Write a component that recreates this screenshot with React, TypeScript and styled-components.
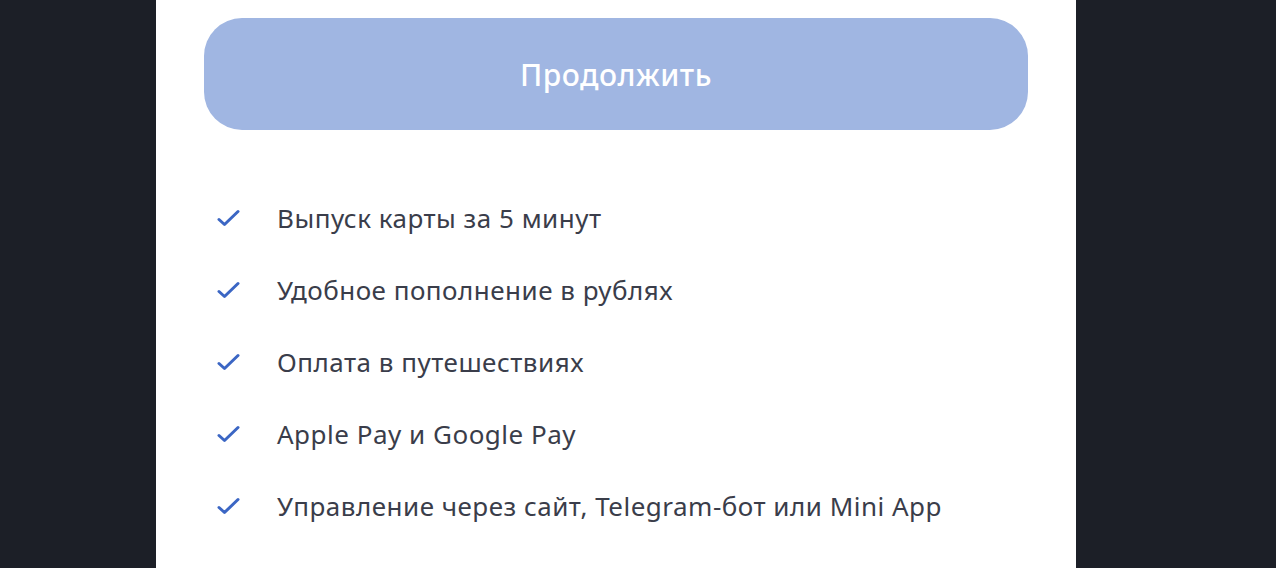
import styled, { createGlobalStyle } from "styled-components";

const GlobalStyle = createGlobalStyle`
  html, body {
    margin: 0;
    padding: 0;
    height: 100%;
    background: #1c1f27;
  }
  body {
    font-family: "Noto Sans", "Liberation Sans", sans-serif;
  }
`;

const FEATURES = [
  "Выпуск карты за 5 минут",
  "Удобное пополнение в рублях",
  "Оплата в путешествиях",
  "Apple Pay и Google Pay",
  "Управление через сайт, Telegram-бот или Mini App",
];

export default function App() {
  return (
    <Page>
      <GlobalStyle />
      <Panel>
        <ContinueButton type="button">Продолжить</ContinueButton>
        <FeatureList>
          {FEATURES.map((text) => (
            <FeatureItem key={text}>
              <CheckIcon />
              <FeatureText>{text}</FeatureText>
            </FeatureItem>
          ))}
        </FeatureList>
      </Panel>
    </Page>
  );
}

function CheckIcon() {
  return (
    <CheckBox>
      <svg width="24" height="18" viewBox="0 0 24 18" fill="none">
        <path
          d="M2 10.5 L7.5 15.5 L21 2.5"
          stroke="#3b66c4"
          strokeWidth="3"
          strokeLinecap="round"
          strokeLinejoin="round"
        />
      </svg>
    </CheckBox>
  );
}

const Page = styled.div`
  display: flex;
  justify-content: flex-start;
  height: 568px;
  padding-left: 156px;
  overflow: hidden;
  background: #1c1f27;
`;

const Panel = styled.main`
  display: flex;
  flex-direction: column;
  width: 920px;
  box-sizing: border-box;
  padding: 18px 48px 0;
  background: #ffffff;
`;

const ContinueButton = styled.button`
  height: 112px;
  width: 100%;
  border: none;
  border-radius: 38px;
  background: #a0b6e2;
  color: #ffffff;
  font-family: inherit;
  font-size: 30px;
  font-weight: 500;
  letter-spacing: 0.5px;
  cursor: pointer;
`;

const FeatureList = styled.ul`
  list-style: none;
  margin: 52px 0 0;
  padding: 0 0 0 13px;
`;

const FeatureItem = styled.li`
  display: flex;
  align-items: center;
  height: 72px;
  gap: 36px;
`;

const CheckBox = styled.span`
  display: flex;
  width: 24px;
  justify-content: center;
`;

const FeatureText = styled.span`
  font-size: 26px;
  letter-spacing: 0.5px;
  color: #3a3d4a;
`;
